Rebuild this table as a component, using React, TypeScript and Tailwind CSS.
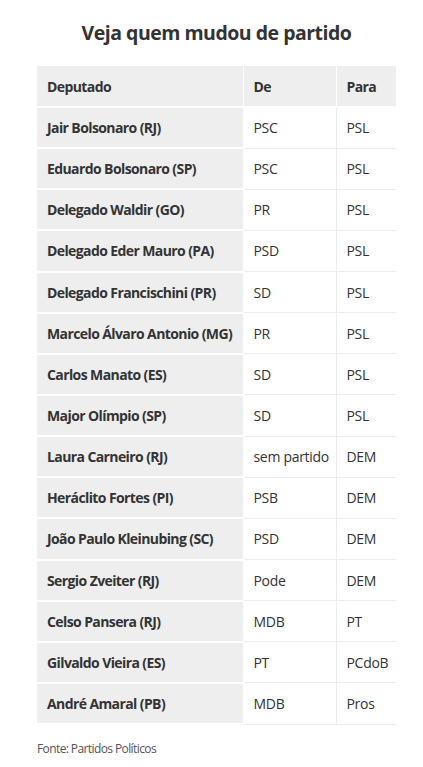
const rows: [string, string, string][] = [
  ["Jair Bolsonaro (RJ)", "PSC", "PSL"],
  ["Eduardo Bolsonaro (SP)", "PSC", "PSL"],
  ["Delegado Waldir (GO)", "PR", "PSL"],
  ["Delegado Eder Mauro (PA)", "PSD", "PSL"],
  ["Delegado Francischini (PR)", "SD", "PSL"],
  ["Marcelo Álvaro Antonio (MG)", "PR", "PSL"],
  ["Carlos Manato (ES)", "SD", "PSL"],
  ["Major Olímpio (SP)", "SD", "PSL"],
  ["Laura Carneiro (RJ)", "sem partido", "DEM"],
  ["Heráclito Fortes (PI)", "PSB", "DEM"],
  ["João Paulo Kleinubing (SC)", "PSD", "DEM"],
  ["Sergio Zveiter (RJ)", "Pode", "DEM"],
  ["Celso Pansera (RJ)", "MDB", "PT"],
  ["Gilvaldo Vieira (ES)", "PT", "PCdoB"],
  ["André Amaral (PB)", "MDB", "Pros"],
];

export default function App() {
  return (
    <div className="min-h-screen bg-white text-[#333] font-['Open_Sans',sans-serif]">
      <div className="ml-[37px] w-[359px]">
        <h2 className="pt-[19px] text-center text-[19.5px] font-bold leading-[28px] tracking-[-0.5px] text-[#333]">
          Veja quem mudou de partido
        </h2>

        <table className="mt-[19px] w-[359px] table-fixed border-collapse text-[14px] tracking-[-0.3px]">
          <thead>
            <tr className="h-[41px] bg-[#eeeeee]">
              <th className="w-[206px] border-r border-b-2 border-white pl-[10px] text-left font-bold tracking-[-0.6px]">
                Deputado
              </th>
              <th className="w-[93px] border-r border-b-2 border-white pl-[10px] text-left font-bold tracking-[-0.6px]">
                De
              </th>
              <th className="border-b-2 border-white pl-[10px] text-left font-bold tracking-[-0.6px]">
                Para
              </th>
            </tr>
          </thead>
          <tbody>
            {rows.map(([name, from, to]) => (
              <tr key={name} className="h-[41.15px]">
                <td className="whitespace-nowrap border-r border-b-2 border-white bg-[#eeeeee] pl-[10px] font-bold tracking-[-0.6px]">
                  {name}
                </td>
                <td className="border-r border-b border-[#ececec] pl-[10px]">{from}</td>
                <td className="border-b border-[#ececec] pl-[10px]">{to}</td>
              </tr>
            ))}
          </tbody>
        </table>

        <p className="mt-[15px] text-[12px] tracking-[-0.6px] text-[#555]">
          Fonte: Partidos Políticos
        </p>
      </div>
    </div>
  );
}
